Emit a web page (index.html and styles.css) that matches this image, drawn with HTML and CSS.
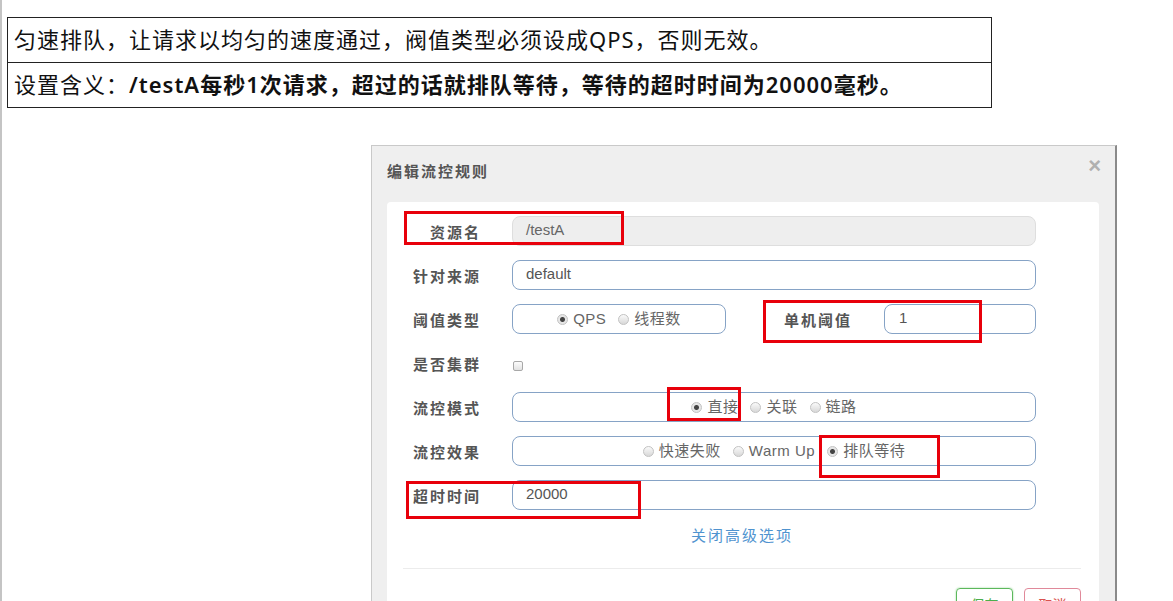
FILE: index.html
```html
<!DOCTYPE html>
<html lang="zh-CN">
<head>
    <meta charset="UTF-8">
    <title>流控规则 - 排队等待</title>
    <link rel="stylesheet" href="styles.css">
</head>
<body>
    <table class="note">
        <tr><td>匀速排队，让请求以均匀的速度通过，阀值类型必须设成QPS，否则无效。</td></tr>
        <tr><td>设置含义：<b>/testA每秒1次请求，超过的话就排队等待，等待的超时时间为20000毫秒。</b></td></tr>
    </table>

    <div class="dialog">
        <div class="dialog-head">
            <div class="dialog-title">编辑流控规则</div>
            <div class="close">&times;</div>
        </div>
        <div class="panel">
            <div class="row">
                <label class="label">资源名</label>
                <div class="field disabled">/testA</div>
            </div>
            <div class="row">
                <label class="label">针对来源</label>
                <div class="field">default</div>
            </div>
            <div class="row">
                <label class="label">阈值类型</label>
                <div class="field group short">
                    <span class="opt"><i class="radio on"></i>QPS</span>
                    <span class="opt"><i class="radio"></i>线程数</span>
                </div>
                <label class="label wide">单机阈值</label>
                <div class="field small">1</div>
            </div>
            <div class="row">
                <label class="label">是否集群</label>
                <i class="check"></i>
            </div>
            <div class="row">
                <label class="label">流控模式</label>
                <div class="field group">
                    <span class="opt"><i class="radio on"></i>直接</span>
                    <span class="opt"><i class="radio"></i>关联</span>
                    <span class="opt"><i class="radio"></i>链路</span>
                </div>
            </div>
            <div class="row">
                <label class="label">流控效果</label>
                <div class="field group">
                    <span class="opt"><i class="radio"></i>快速失败</span>
                    <span class="opt"><i class="radio"></i>Warm Up</span>
                    <span class="opt"><i class="radio on"></i>排队等待</span>
                </div>
            </div>
            <div class="row">
                <label class="label">超时时间</label>
                <div class="field">20000</div>
            </div>
            <div class="more">关闭高级选项</div>
            <div class="line"></div>
            <div class="buttons">
                <span class="btn save">保存</span>
                <span class="btn cancel">取消</span>
            </div>

            <!-- red marks drawn over the form -->
            <div class="mark" style="left:17px;top:9px;width:220px;height:34px"></div>
            <div class="mark" style="left:376px;top:98px;width:219px;height:43px"></div>
            <div class="mark" style="left:280px;top:185px;width:74px;height:34px"></div>
            <div class="mark" style="left:432px;top:233px;width:121px;height:43px"></div>
            <div class="mark" style="left:19px;top:279px;width:235px;height:38px"></div>
        </div>
    </div>
</body>
</html>
```

FILE: styles.css
```css
* {
    box-sizing: border-box;
}

html, body {
    margin: 0;
    padding: 0;
    height: 100%;
    overflow: hidden;
}

body {
    background: #fff;
    border-left: 2px solid #c4c4c4;
    font-family: "Liberation Sans", "Noto Sans CJK SC", sans-serif;
}

/* top note table */
.note {
    margin: 17px 0 0 5px;
    width: 985px;
    border-collapse: collapse;
    font-family: "Noto Sans", "Noto Sans CJK SC", sans-serif;
    font-size: 22px;
    letter-spacing: 1px;
    color: #111;
}
.note td {
    border: 1px solid #222;
    height: 45px;
    padding: 0 0 2px 6px;
    line-height: 30px;
    white-space: nowrap;
}
.note b {
    font-weight: 600;
}

/* dialog */
.dialog {
    margin: 37px 0 0 369px;
    width: 746px;
    height: 500px;
    background: #efefef;
    border: 1px solid #c9c9c9;
    border-right: 2px solid #8a8a8a;
}
.dialog-head {
    display: flex;
    justify-content: space-between;
    align-items: flex-start;
    height: 56px;
    padding: 16px 14px 0 15px;
}
.dialog-title {
    font-size: 15px;
    letter-spacing: 2px;
    font-weight: bold;
    line-height: 20px;
    color: #555;
}
.close {
    margin-top: -6px;
    font-size: 22px;
    font-weight: bold;
    line-height: 20px;
    color: #b0b0b0;
}

.panel {
    position: relative;
    margin: 0 16px 0 15px;
    height: 420px;
    background: #fff;
    border-radius: 4px 4px 0 0;
    padding: 14px 18px 0 16px;
}

.row {
    display: flex;
    align-items: center;
    height: 30px;
    margin-bottom: 14px;
}
.row:nth-child(7) {
    margin-bottom: 0;
}
.label {
    width: 78px;
    text-align: right;
    font-size: 15px;
    letter-spacing: 2px;
    font-weight: bold;
    color: #555;
    margin-right: 31px;
    flex-shrink: 0;
}
.label.wide {
    width: 126px;
    margin-right: 32px;
}
.field {
    width: 524px;
    height: 30px;
    border: 1px solid #86a3c6;
    border-radius: 8px;
    padding: 0 13px;
    font-size: 15px;
    line-height: 26px;
    color: #555;
}
.field.disabled {
    background: #eee;
    border-color: #dedede;
    color: #666;
}
.field.short {
    width: 214px;
}
.field.small {
    width: 152px;
    padding-left: 14px;
}
.group {
    display: flex;
    justify-content: center;
    align-items: center;
    gap: 12px;
}
.opt {
    display: flex;
    align-items: center;
    gap: 5px;
    color: #666;
    letter-spacing: 0.5px;
}
.radio {
    width: 11px;
    height: 11px;
    border-radius: 50%;
    border: 1px solid #c2c2c2;
    background: linear-gradient(#fafafa, #d8d8d8);
}
.radio.on {
    background: radial-gradient(circle, #444 0, #444 2px, #e6e6e6 3px);
}
.check {
    width: 10px;
    height: 10px;
    margin-top: 6px;
    margin-left: 1px;
    border: 1px solid #a8a8a8;
    border-radius: 2px;
    background: linear-gradient(#fcfcfc, #e2e2e2);
}

.more {
    margin-top: 16px;
    text-align: center;
    font-size: 15px;
    letter-spacing: 2px;
    line-height: 20px;
    color: #4f93cf;
}
.line {
    margin-top: 22px;
    height: 1px;
    background: #ececec;
}
.buttons {
    display: flex;
    justify-content: flex-end;
    gap: 11px;
    margin-top: 19px;
}
.btn {
    width: 57px;
    height: 34px;
    border: 1px solid;
    border-radius: 4px;
    text-align: center;
    font-size: 14px;
    line-height: 32px;
}
.btn.save {
    border-color: #5cb85c;
    box-shadow: 0 0 2px #8fd08f;
    color: #4cae4c;
}
.btn.cancel {
    border-color: #e0899a;
    color: #d9534f;
}

.mark {
    position: absolute;
    border: 3px solid #e8000b;
}
```
